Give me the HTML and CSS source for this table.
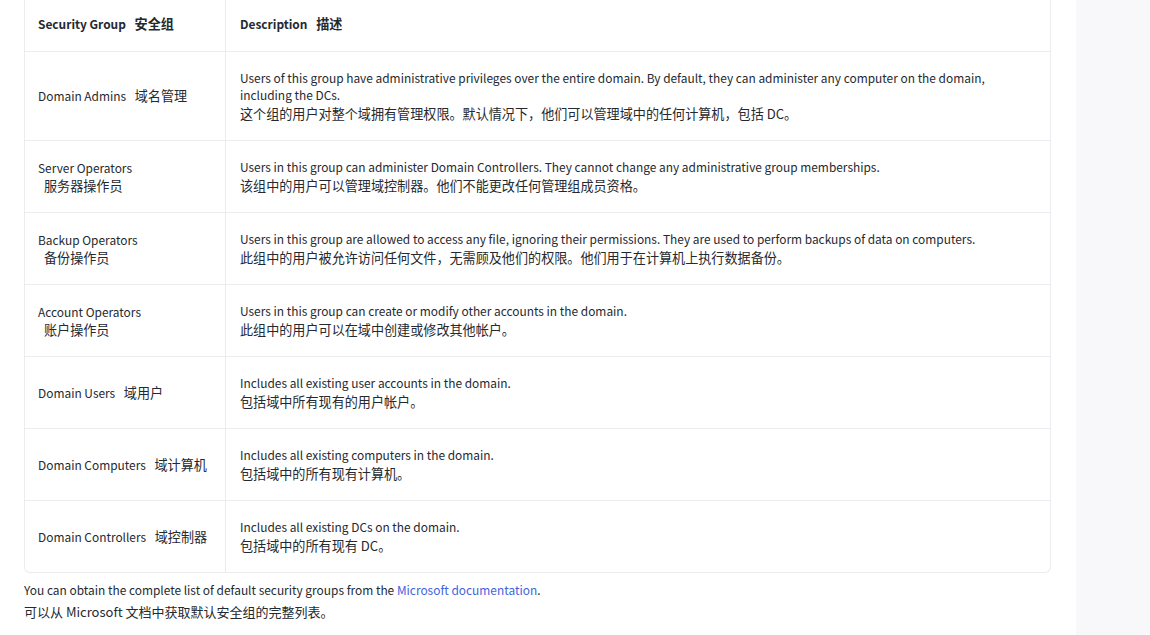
FILE: index.html
```html
<!DOCTYPE html>
<html lang="zh-CN">
  <head>
    <meta charset="UTF-8" />
    <meta name="viewport" content="width=device-width, initial-scale=1.0" />
    <title>Security Groups 安全组</title>
    <link rel="stylesheet" href="styles.css">
  </head>
  <body>
    <div class="layout">
      <main class="content">
        <div class="table-wrap">
          <table class="groups">
            <thead>
              <tr>
                <th>Security Group <span class="zh">安全组</span></th>
                <th>Description <span class="zh">描述</span></th>
              </tr>
            </thead>
            <tbody>
              <tr>
                <td>Domain Admins <span class="zh">域名管理</span></td>
                <td>
                  Users of this group have administrative privileges over the entire domain. By default, they can administer any computer on the domain, including the DCs.
                  <span class="cn">这个组的用户对整个域拥有管理权限。默认情况下，他们可以管理域中的任何计算机，包括 DC。</span>
                </td>
              </tr>
              <tr>
                <td>Server Operators <span class="zh">服务器操作员</span></td>
                <td>
                  Users in this group can administer Domain Controllers. They cannot change any administrative group memberships.
                  <span class="cn">该组中的用户可以管理域控制器。他们不能更改任何管理组成员资格。</span>
                </td>
              </tr>
              <tr>
                <td>Backup Operators <span class="zh">备份操作员</span></td>
                <td>
                  Users in this group are allowed to access any file, ignoring their permissions. They are used to perform backups of data on computers.
                  <span class="cn">此组中的用户被允许访问任何文件，无需顾及他们的权限。他们用于在计算机上执行数据备份。</span>
                </td>
              </tr>
              <tr>
                <td>Account Operators <span class="zh">账户操作员</span></td>
                <td>
                  Users in this group can create or modify other accounts in the domain.
                  <span class="cn">此组中的用户可以在域中创建或修改其他帐户。</span>
                </td>
              </tr>
              <tr>
                <td>Domain Users <span class="zh">域用户</span></td>
                <td>
                  Includes all existing user accounts in the domain.
                  <span class="cn">包括域中所有现有的用户帐户。</span>
                </td>
              </tr>
              <tr>
                <td>Domain Computers <span class="zh">域计算机</span></td>
                <td>
                  Includes all existing computers in the domain.
                  <span class="cn">包括域中的所有现有计算机。</span>
                </td>
              </tr>
              <tr>
                <td>Domain Controllers <span class="zh">域控制器</span></td>
                <td>
                  Includes all existing DCs on the domain.
                  <span class="cn">包括域中的所有现有 DC。</span>
                </td>
              </tr>
            </tbody>
          </table>
        </div>

        <p class="note">
          You can obtain the complete list of default security groups from the <a href="#">Microsoft documentation</a>.
          <span class="cn">可以从 Microsoft 文档中获取默认安全组的完整列表。</span>
        </p>
      </main>
      <aside class="sidebar"></aside>
    </div>
  </body>
</html>
```

FILE: styles.css
```css
body {
  font-family: "Noto Sans CJK SC", "Noto Sans", sans-serif;
  font-size: 11.92px;
  line-height: 17.5px;
  color: #24292f;
  margin: 0;
  background-color: #fff;
}
.layout {
  display: flex;
  min-height: 635px;
}
.content {
  flex: 1;
  padding: 0 25px 0 24px;
}
.sidebar {
  width: 74px;
  background-color: #f8f8fa;
}
.table-wrap {
  border: 1px solid #ebebf0;
  border-top: none;
  border-radius: 0 0 6px 6px;
  overflow: hidden;
}
.groups {
  width: 100%;
  border-collapse: collapse;
}
.groups th,
.groups td {
  text-align: left;
  vertical-align: middle;
  padding: 17px 14px;
  border-bottom: 1px solid #ebebf0;
}
.groups th {
  font-weight: bold;
  padding: 15px 14px 18px;
}
.groups tr > :first-child {
  width: 173px;
  padding-left: 13px;
  border-right: 1px solid #ebebf0;
}
.groups tbody tr:last-child td {
  border-bottom: none;
}
.zh {
  display: inline-block;
  margin-left: 6px;
  font-size: 13.1px;
}
.cn {
  display: block;
  font-size: 13.1px;
  line-height: 19.5px;
}
.note {
  margin: 6px 0 0;
  line-height: 22px;
}
.note .cn {
  font-size: 13px;
  line-height: 22px;
}
.note a {
  color: #3e63dd;
  text-decoration: none;
}
```
